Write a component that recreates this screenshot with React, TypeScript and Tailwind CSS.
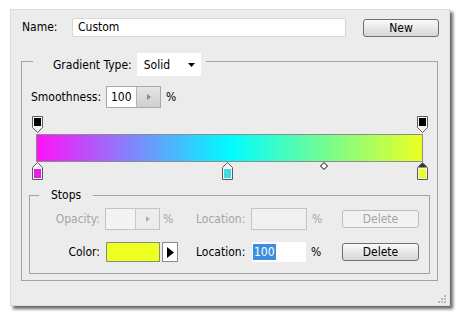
import React from "react";

const font = { fontFamily: '"DejaVu Sans Condensed", "Liberation Sans", sans-serif' };

function TopStop({ left }: { left: number }) {
  return (
    <svg className="absolute top-0" style={{ left }} width="11" height="17" viewBox="0 0 11 17">
      <path d="M0.5 0.5 H10.5 V11.5 L5.5 16.5 L0.5 11.5 Z" fill="#f4f4f4" stroke="#5a5a5a" />
      <rect x="2" y="2" width="7" height="8" fill="#000" />
    </svg>
  );
}

function BottomStop({ left, color, selected }: { left: number; color: string; selected?: boolean }) {
  return (
    <svg className="absolute top-0" style={{ left }} width="11" height="18" viewBox="0 0 11 18">
      <path d="M0.5 5.5 L5.5 0.5 L10.5 5.5 V17.5 H0.5 Z" fill="#f4f4f4" stroke="#5a5a5a" />
      {selected && <path d="M1 5.5 L5.5 1 L10 5.5 Z" fill="#333" />}
      <rect x="2" y="7" width="7" height="9" fill={color} />
    </svg>
  );
}

function Stepper() {
  return (
    <div className="w-[24px] h-full bg-gradient-to-b from-[#e6e6e6] to-[#cfcfcf] border-l border-[#b5b5b5] flex items-center justify-center">
      <svg width="4" height="6" viewBox="0 0 4 6">
        <path d="M0 0 L4 3 L0 6 Z" fill="#8a8a8a" />
      </svg>
    </div>
  );
}

export default function App() {
  const barLeft = 1;
  const barSpan = 385;
  const pos = (p: number) => barLeft + p * barSpan - 5.5;
  return (
    <div className="w-[461px] h-[316px] bg-white overflow-hidden text-[12px] text-black" style={font}>
      <div className="ml-[10px] mt-[9px] w-[440px] h-[297px] bg-[#ececec] border border-[#dcdcdc] shadow-[3px_3px_3px_rgba(0,0,0,0.6)] flex flex-col">
        {/* Name row */}
        <div className="flex items-start mt-[8px] pl-[11px]">
          <div className="w-[50px] h-[19px] leading-[19px]">Name:</div>
          <div className="w-[274px] h-[19px] bg-white border border-[#d6d6d6] rounded-[2px] pl-[5px] leading-[17px]">Custom</div>
          <div className="ml-[17px] mt-[1px] w-[76px] h-[18px] rounded-[3px] border border-[#6e6e6e] bg-gradient-to-b from-[#fafafa] to-[#d6d6d6] flex items-center justify-center">New</div>
        </div>

        {/* Gradient group */}
        <div className="mt-[24px] ml-[10px] w-[417px] h-[220px] border border-[#a2a2a2] flex flex-col">
          <div className="-mt-[9px] ml-[11px] self-start bg-[#ececec] pl-[20px] pr-[5px] h-[23px] flex items-center">
            <span>Gradient Type:</span>
            <div className="ml-[5px] w-[64px] h-[23px] bg-white flex items-center pl-[7px] pr-[6px] justify-between">
              <span>Solid</span>
              <svg width="7" height="4" viewBox="0 0 7 4"><path d="M0 0 H7 L3.5 4 Z" fill="#000" /></svg>
            </div>
          </div>

          <div className="mt-[10px] ml-[9px] flex items-center h-[22px]">
            <span className="w-[75px]">Smoothness:</span>
            <div className="w-[55px] h-[22px] border border-[#a8a8a8] bg-white flex">
              <div className="flex-1 pl-[4px] leading-[20px]">100</div>
              <Stepper />
            </div>
            <span className="ml-[5px]">%</span>
          </div>

          {/* gradient editor */}
          <div className="mt-[8px] ml-[14px] w-[387px] flex flex-col">
            <div className="relative h-[18px]">
              <TopStop left={pos(0)} />
              <TopStop left={pos(1)} />
            </div>
            <div className="h-[28px] border border-[#8c8c8c] bg-[linear-gradient(to_right,#ff12f8,#00fbff_50%,#eaff22)]" />
            <div className="relative h-[18px]">
              <BottomStop left={pos(0)} color="#e81ee8" />
              <BottomStop left={pos(0.495)} color="#3fdede" />
              <svg className="absolute" style={{ left: pos(0.745) + 2, top: 0 }} width="8" height="8" viewBox="0 0 8 8">
                <path d="M4 0.5 L7.5 4 L4 7.5 L0.5 4 Z" fill="#fff" stroke="#000" />
              </svg>
              <BottomStop left={pos(1)} color="#eaff2a" selected />
            </div>
          </div>

          {/* Stops group */}
          <div className="mt-[15px] ml-[7px] w-[401px] h-[79px] border border-[#a2a2a2] flex flex-col">
            <div className="-mt-[9px] ml-[9px] self-start bg-[#ececec] px-[12px] h-[16px] leading-[16px]">Stops</div>
            <div className="mt-[5px] flex items-center h-[22px] text-[#a4a4a4]">
              <span className="w-[70px] text-right">Opacity:</span>
              <div className="ml-[5px] w-[55px] h-[22px] border border-[#c4c4c4] bg-[#f3f3f3] flex">
                <div className="flex-1" />
                <div className="w-[24px] h-full border-l border-[#c9c9c9] bg-[#ececec] flex items-center justify-center">
                  <svg width="4" height="6" viewBox="0 0 4 6"><path d="M0 0 L4 3 L0 6 Z" fill="#b0b0b0" /></svg>
                </div>
              </div>
              <span className="w-[36px] pl-[3px]">%</span>
              <span className="w-[55px]">Location:</span>
              <div className="w-[56px] h-[22px] border border-[#c4c4c4] bg-[#f0f0f0]" />
              <span className="w-[35px] pl-[5px]">%</span>
              <div className="w-[77px] h-[18px] rounded-[3px] border border-[#bdbdbd] bg-[#f2f2f2] flex items-center justify-center">Delete</div>
            </div>
            <div className="mt-[12px] flex items-center h-[20px]">
              <span className="w-[70px] text-right">Color:</span>
              <div className="ml-[6px] w-[90px] flex items-center">
                <div className="w-[54px] h-[20px] border border-[#8a8a8a] bg-[#eeff22]" />
                <div className="ml-[2px] w-[16px] h-[20px] border border-[#8a8a8a] bg-white flex items-center justify-center">
                  <svg width="7" height="11" viewBox="0 0 7 11"><path d="M0 0 L7 5.5 L0 11 Z" fill="#000" /></svg>
                </div>
              </div>
              <span className="w-[56px]">Location:</span>
              <div className="w-[54px] h-[20px] bg-white flex items-center pl-[1px]">
                <span className="bg-[#3d8ee2] text-white px-[1px] leading-[16px]">100</span>
              </div>
              <span className="w-[36px] pl-[5px]">%</span>
              <div className="w-[77px] h-[18px] rounded-[3px] border border-[#6e6e6e] bg-gradient-to-b from-[#fafafa] to-[#d6d6d6] flex items-center justify-center">Delete</div>
            </div>
          </div>
        </div>

        {/* resize grip */}
        <div className="mt-auto mb-[2px] mr-[3px] self-end grid grid-cols-3 gap-[1px]">
          <div className="w-[2px] h-[2px]" />
          <div className="w-[2px] h-[2px]" />
          <div className="w-[2px] h-[2px] bg-[#b8b8b8]" />
          <div className="w-[2px] h-[2px]" />
          <div className="w-[2px] h-[2px] bg-[#b8b8b8]" />
          <div className="w-[2px] h-[2px] bg-[#b8b8b8]" />
          <div className="w-[2px] h-[2px] bg-[#b8b8b8]" />
          <div className="w-[2px] h-[2px] bg-[#b8b8b8]" />
          <div className="w-[2px] h-[2px] bg-[#b8b8b8]" />
        </div>
      </div>
    </div>
  );
}
